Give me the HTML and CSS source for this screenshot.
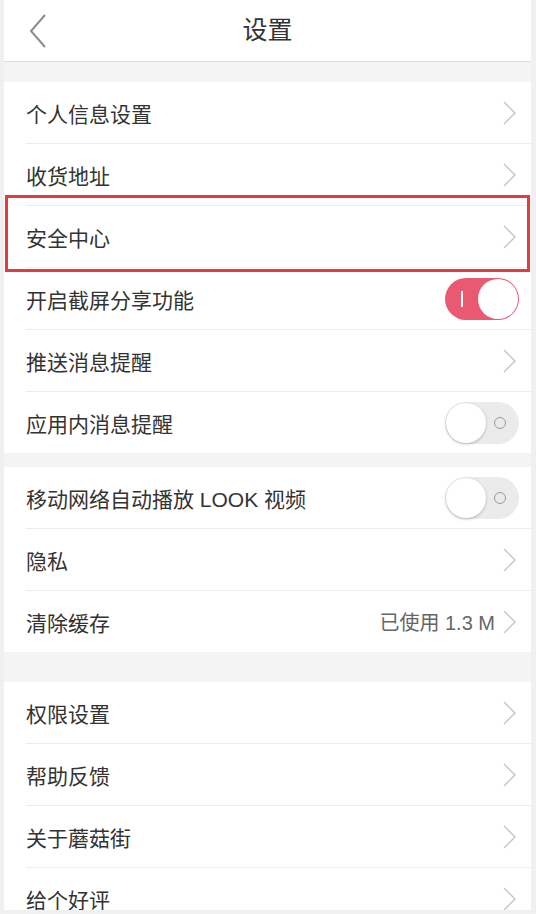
FILE: index.html
```html
<!DOCTYPE html>
<html lang="zh-CN">
<head>
<meta charset="utf-8">
<title>设置</title>
<link rel="stylesheet" href="styles.css">
</head>
<body>
<div class="page">
  <header class="header">
    <svg class="back" width="18" height="34" viewBox="0 0 18 34"><polyline points="16,1 2,17 16,33" fill="none" stroke="#8c8c8c" stroke-width="2"/></svg>
    <h1 class="title">设置</h1>
  </header>

  <section class="group g1">
    <div class="row"><div class="row-inner"><span class="label">个人信息设置</span><svg class="chev" width="14" height="24" viewBox="0 0 14 24"><polyline points="1,1 12,12 1,23" fill="none" stroke="#c8c8c8" stroke-width="1.5"/></svg></div></div>
    <div class="row"><div class="row-inner"><span class="label">收货地址</span><svg class="chev" width="14" height="24" viewBox="0 0 14 24"><polyline points="1,1 12,12 1,23" fill="none" stroke="#c8c8c8" stroke-width="1.5"/></svg></div></div>
    <div class="row highlight"><div class="row-inner"><span class="label">安全中心</span><svg class="chev" width="14" height="24" viewBox="0 0 14 24"><polyline points="1,1 12,12 1,23" fill="none" stroke="#c8c8c8" stroke-width="1.5"/></svg></div></div>
    <div class="row"><div class="row-inner"><span class="label">开启截屏分享功能</span><span class="toggle on"><span class="mark"></span><span class="knob"></span></span></div></div>
    <div class="row"><div class="row-inner"><span class="label">推送消息提醒</span><svg class="chev" width="14" height="24" viewBox="0 0 14 24"><polyline points="1,1 12,12 1,23" fill="none" stroke="#c8c8c8" stroke-width="1.5"/></svg></div></div>
    <div class="row"><div class="row-inner"><span class="label">应用内消息提醒</span><span class="toggle off"><span class="knob"></span><span class="ring"></span></span></div></div>
  </section>

  <section class="group g2">
    <div class="row"><div class="row-inner"><span class="label">移动网络自动播放 LOOK 视频</span><span class="toggle off"><span class="knob"></span><span class="ring"></span></span></div></div>
    <div class="row"><div class="row-inner"><span class="label">隐私</span><svg class="chev" width="14" height="24" viewBox="0 0 14 24"><polyline points="1,1 12,12 1,23" fill="none" stroke="#c8c8c8" stroke-width="1.5"/></svg></div></div>
    <div class="row"><div class="row-inner"><span class="label">清除缓存</span><span class="value">已使用 1.3 M</span><svg class="chev" width="14" height="24" viewBox="0 0 14 24"><polyline points="1,1 12,12 1,23" fill="none" stroke="#c8c8c8" stroke-width="1.5"/></svg></div></div>
  </section>

  <section class="group g3">
    <div class="row"><div class="row-inner"><span class="label">权限设置</span><svg class="chev" width="14" height="24" viewBox="0 0 14 24"><polyline points="1,1 12,12 1,23" fill="none" stroke="#c8c8c8" stroke-width="1.5"/></svg></div></div>
    <div class="row"><div class="row-inner"><span class="label">帮助反馈</span><svg class="chev" width="14" height="24" viewBox="0 0 14 24"><polyline points="1,1 12,12 1,23" fill="none" stroke="#c8c8c8" stroke-width="1.5"/></svg></div></div>
    <div class="row"><div class="row-inner"><span class="label">关于蘑菇街</span><svg class="chev" width="14" height="24" viewBox="0 0 14 24"><polyline points="1,1 12,12 1,23" fill="none" stroke="#c8c8c8" stroke-width="1.5"/></svg></div></div>
    <div class="row"><div class="row-inner"><span class="label">给个好评</span><svg class="chev" width="14" height="24" viewBox="0 0 14 24"><polyline points="1,1 12,12 1,23" fill="none" stroke="#c8c8c8" stroke-width="1.5"/></svg></div></div>
  </section>
</div>
</body>
</html>
```

FILE: styles.css
```css
html, body {
  margin: 0;
  padding: 0;
}
body {
  background: #f0f0f0;
  height: 914px;
  overflow: hidden;
  font-family: "Liberation Sans", "Noto Sans CJK SC", sans-serif;
  color: #333;
}
.page {
  margin: 0 5px 0 4px;
  height: 910px;
  overflow: hidden;
  background: #f4f4f4;
}
.header {
  height: 61px;
  background: #fff;
  border-bottom: 1px solid #dddddd;
  display: grid;
  grid-template-columns: 1fr auto 1fr;
  align-items: center;
}
.back {
  margin-left: 25px;
  display: block;
}
.title {
  margin: 0;
  font-size: 25px;
  font-weight: normal;
  color: #333;
  line-height: 1;
}
.group {
  background: #fff;
}
.g1 { margin-top: 20px; }
.g2 { margin-top: 14px; }
.g3 { margin-top: 30px; }
.row {
  padding-left: 22px;
  position: relative;
}
.row-inner {
  height: 61px;
  display: flex;
  align-items: center;
  padding-right: 14px;
  border-bottom: 1px solid #ededed;
}
.row:last-child .row-inner {
  border-bottom: none;
}
.label {
  flex: 1;
  font-size: 21px;
  color: #333;
}
.value {
  font-size: 20px;
  color: #666;
  margin-right: 8px;
}
.chev {
  display: block;
}
.highlight::after {
  content: "";
  position: absolute;
  left: 1px;
  right: 1px;
  top: -11px;
  bottom: -4px;
  border: 3px solid #e23c3f;
  pointer-events: none;
}
.toggle {
  width: 74px;
  height: 42px;
  border-radius: 21px;
  position: relative;
  margin-right: -2px;
  box-sizing: border-box;
}
.toggle.on {
  background: #e95a72;
}
.toggle.off {
  background: #ebebeb;
}
.toggle .knob {
  position: absolute;
  top: 1px;
  width: 40px;
  height: 40px;
  border-radius: 50%;
  background: #fff;
}
.toggle.on .knob {
  right: 1px;
}
.toggle.off .knob {
  left: 1px;
  box-shadow: 0 1px 3px rgba(0, 0, 0, 0.25);
}
.toggle .mark {
  position: absolute;
  left: 16px;
  top: 13px;
  width: 2px;
  height: 16px;
  background: #fff;
}
.toggle .ring {
  position: absolute;
  left: 49px;
  top: 15px;
  width: 10px;
  height: 10px;
  border: 1.5px solid #9a9a9a;
  border-radius: 50%;
}
```
